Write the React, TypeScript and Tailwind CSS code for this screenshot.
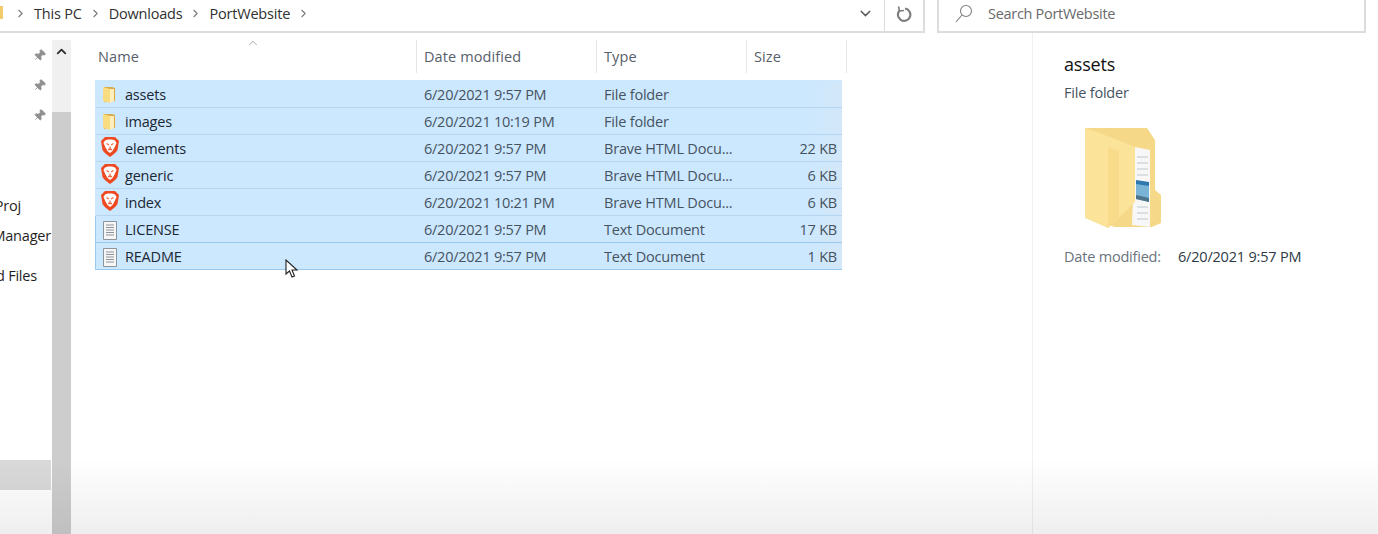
import { ChevronDown, ChevronRight, ChevronUp, Pin } from 'lucide-react';

const files = [
  { name: 'assets', date: '6/20/2021 9:57 PM', type: 'File folder', size: '', icon: 'folder' },
  { name: 'images', date: '6/20/2021 10:19 PM', type: 'File folder', size: '', icon: 'folder' },
  { name: 'elements', date: '6/20/2021 9:57 PM', type: 'Brave HTML Docu...', size: '22 KB', icon: 'brave' },
  { name: 'generic', date: '6/20/2021 9:57 PM', type: 'Brave HTML Docu...', size: '6 KB', icon: 'brave' },
  { name: 'index', date: '6/20/2021 10:21 PM', type: 'Brave HTML Docu...', size: '6 KB', icon: 'brave' },
  { name: 'LICENSE', date: '6/20/2021 9:57 PM', type: 'Text Document', size: '17 KB', icon: 'text' },
  { name: 'README', date: '6/20/2021 9:57 PM', type: 'Text Document', size: '1 KB', icon: 'text' },
];

function FolderIcon() {
  return (
    <svg width="14" height="18" viewBox="0 0 14 18" className="ml-[6px] shrink-0">
      <path d="M2 1 L10 1 L13 2 L13 15 L2 16 Z" fill="#d9aa45" />
      <path d="M1 1 L8 3 L8 17 L1 15 Z" fill="#f8dc80" />
      <path d="M8 3 L12 3 L12 15 L8 17 Z" fill="#fdeebc" />
    </svg>
  );
}

function BraveIcon() {
  return (
    <svg width="20" height="22" viewBox="0 0 20 22" className="ml-[4px] -mt-[4px] shrink-0">
      <path d="M5 1 H15 L19 5 L17.500 14 Q16 17 10 21 Q4 17 2.500 14 L1 5 Z" fill="#ee4a22" />
      <path d="M5 4.500 L8 3.500 H12 L15 4.500 L16.500 7 L14.500 11.500 L12.500 15 L10 17 L7.500 15 L5.500 11.500 L3.500 7 Z" fill="#fff" />
      <path d="M6.500 7.500 L9 9 M13.500 7.500 L11 9 M10 10.500 V13 M8 13.500 H12" stroke="#ee6a42" strokeWidth="1.300" fill="none" />
    </svg>
  );
}

function TextIcon() {
  return (
    <svg width="16" height="19" viewBox="0 0 16 19" className="ml-[6px] shrink-0">
      <path d="M1.500 .5 H14.500 V18.500 H1.500 Z" fill="#f6f6f6" stroke="#8d959c" />
      <path d="M4 4 H12 M4 6.500 H12 M4 9 H12 M4 11.500 H12 M4 14 H12" stroke="#8d959c" />
    </svg>
  );
}

function PreviewFolder() {
  return (
    <svg width="78" height="103" viewBox="0 0 78 103" className="ml-[21px] mt-[21px]">
      <path d="M0 1 H62 L70 13 V63 L76 68 V96 L67 100 H30 L0 91 Z" fill="#f6d988" />
      <path d="M50 20 L65 23 V100 L47 98 Z" fill="#f7f7f7" />
      <path d="M52 30 H63 M52 36 H63 M52 42 H63 M52 48 H63 M52 80 H63 M52 86 H63 M52 92 H63" stroke="#bcc8d0" />
      <path d="M51 55 L64 57 V75 L51 72 Z" fill="#79b4d6" />
      <path d="M51 53 L64 55 V59 L51 57 Z" fill="#2f78ad" />
      <path d="M51 68 L64 71 V75 L51 72 Z" fill="#4d7488" />
      <path d="M0 1 L12 5 L50 20 V75 L23 101 L0 91 Z" fill="#fce39a" />
      <path d="M23 20 L34 24 V90 L23 101 Z" fill="#f8dc8c" />
    </svg>
  );
}

function FileIcon({ kind }: { kind: string }) {
  if (kind === 'folder') return <FolderIcon />;
  if (kind === 'brave') return <BraveIcon />;
  return <TextIcon />;
}

function Crumb({ label }: { label: string }) {
  return (
    <>
      <span>{label}</span>
      <ChevronRight className="w-[13px] h-[13px] text-[#7a7a7a]" strokeWidth={2} />
    </>
  );
}

function PinRow() {
  return (
    <div className="h-[30px] flex items-center justify-end pr-[6px]">
      <Pin className="w-[13px] h-[13px] rotate-45 text-[#8f8f8f] fill-[#8f8f8f]" strokeWidth={1.500} />
    </div>
  );
}

function SideLabel({ text, right }: { text: string; right: string }) {
  return (
    <div className={`flex justify-end overflow-hidden whitespace-nowrap h-[20px] items-center ${right}`}>
      {text}
    </div>
  );
}

export default function App() {
  return (
    <div className="relative w-[1378px] h-[534px] overflow-hidden bg-white text-[14.5px] text-[#2e3a46] font-['Open_Sans','Noto_Sans',sans-serif] tracking-[-0.2px] whitespace-nowrap">
      {/* Address and search */}
      <div className="h-[33px] flex">
        <div className="w-[925px] h-full border-b-2 border-r-2 border-[#dcdcdc] flex items-center">
          <div className="w-[3px] h-[13px] -mt-[6px] bg-[#f2cc6c] shrink-0" />
          <div className="flex items-center pl-[11px] gap-[7px] pb-[4px] text-[#303030]">
            <ChevronRight className="w-[13px] h-[13px] text-[#7a7a7a]" strokeWidth={2} />
            <Crumb label="This PC" />
            <Crumb label="Downloads" />
            <Crumb label="PortWebsite" />
          </div>
          <div className="ml-auto w-[39px] h-full flex items-center justify-center pb-[4px] border-r border-[#dcdcdc]">
            <ChevronDown className="w-[17px] h-[17px] text-[#606060]" strokeWidth={2} />
          </div>
          <div className="w-[38px] h-full flex items-center justify-center pb-[4px]">
            <svg width="16" height="18" viewBox="0 0 16 18" fill="none" stroke="#7d7d7d" strokeWidth="2.200">
              <path d="M9 3.500 A6.200 6.200 0 1 1 3.800 5.200" />
              <path d="M2.500 1.500 L3.500 6 L8 5.500" strokeWidth="1.600" />
            </svg>
          </div>
        </div>
        <div className="ml-[12px] w-[429px] h-full border-b-2 border-l-2 border-r-2 border-[#dcdcdc] flex items-center pl-[15px] pb-[4px] text-[#6a6a6a]">
          <svg width="19" height="19" viewBox="0 0 19 19" fill="none" stroke="#808080" strokeWidth="1.100">
            <circle cx="12" cy="7" r="5.500" />
            <path d="M8 11 L2 18" />
          </svg>
          <span className="ml-[15px] tracking-[-0.3px]">Search PortWebsite</span>
        </div>
      </div>

      <div className="flex h-[501px]">
        {/* Quick access sidebar */}
        <div className="w-[52px] shrink-0 flex flex-col text-[#1f1f1f]">
          <div className="h-[7px]" />
          <PinRow />
          <PinRow />
          <PinRow />
          <div className="h-[68px]" />
          <SideLabel text="Proj" right="pr-[31px] mt-[-2px]" />
          <SideLabel text="Manager" right="mt-[10px] pr-[1px]" />
          <SideLabel text="d Files" right="mt-[20px] pr-[15px]" />
          <div className="mt-[174px] h-[30px] mr-[1px] bg-[#d9d9d9]" />
        </div>

        {/* Scrollbar */}
        <div className="w-[19px] shrink-0 mt-[7px] flex flex-col bg-[#f0f0f0]">
          <div className="h-[72px] flex justify-center pt-[4px]">
            <ChevronUp className="w-[15px] h-[15px] text-[#303030]" strokeWidth={3} />
          </div>
          <div className="flex-1 bg-[#cdcdcd]" />
        </div>

        {/* File list */}
        <div className="w-[961px] shrink-0 relative pl-[24px] pt-[7px]">
          <ChevronUp className="absolute left-[175px] top-[3px] w-[14px] h-[14px] text-[#8a8a8a]" strokeWidth={1.200} />
          <div className="h-[40px] grid grid-cols-[322px_180px_150px_100px] text-[#57606b] tracking-[0.1px]">
            <div className="border-r border-[#e6e6e6] pl-[3px] h-[33px] flex items-center">Name</div>
            <div className="border-r border-[#e6e6e6] pl-[7px] h-[33px] flex items-center">Date modified</div>
            <div className="border-r border-[#e6e6e6] pl-[7px] h-[33px] flex items-center">Type</div>
            <div className="border-r border-[#e6e6e6] pl-[7px] h-[33px] flex items-center">Size</div>
          </div>
          <div className="w-[747px] border-t border-[#cce8ff]">
            {files.map((file, i) => (
              <div
                key={file.name}
                className={`h-[27px] pt-[2px] grid grid-cols-[328px_180px_120px_113px] items-center bg-gradient-to-r from-[#cce8ff] from-[95%] to-[#d3e7f8] border-b border-l ${
                  i >= 5 ? 'border-[#99c9ef]' : 'border-b-[#b5d5f0] border-l-[#cce8ff]'
                }`}
              >
                <div className="flex items-center text-[#1c2733]">
                  <div className="w-[29px] shrink-0 flex items-center">
                    <FileIcon kind={file.icon} />
                  </div>
                  {file.name}
                </div>
                <div className="text-[#46535f] tracking-[-0.25px]">{file.date}</div>
                <div className="text-[#46535f]">{file.type}</div>
                <div className="text-right text-[#46535f]">{file.size}</div>
              </div>
            ))}
          </div>
          {/* mouse cursor */}
          <svg width="14" height="20" viewBox="0 0 14 20" className="absolute left-[214px] top-[226px]">
            <path d="M1 1 V15 L4.500 12 L7 18 L9.500 17 L7 11 H12 Z" fill="#fff" stroke="#222" strokeWidth="1.100" />
          </svg>
        </div>

        {/* Preview pane */}
        <div className="flex-1 border-l border-[#f0f0f0] pl-[31px] pt-[18px]">
          <div className="text-[18px] leading-[26px] text-[#111]">assets</div>
          <div className="mt-[3px] leading-[26px] text-[#46535f]">File folder</div>
          <PreviewFolder />
          <div className="mt-[16px] flex">
            <span className="w-[114px] text-[#6a737c]">Date modified:</span>
            <span className="text-[#2e3a46]">6/20/2021 9:57 PM</span>
          </div>
        </div>
      </div>

      {/* fade at the bottom of the window */}
      <div className="absolute left-0 right-0 bottom-0 h-[76px] bg-gradient-to-b from-transparent to-black/[0.065] pointer-events-none" />
    </div>
  );
}
